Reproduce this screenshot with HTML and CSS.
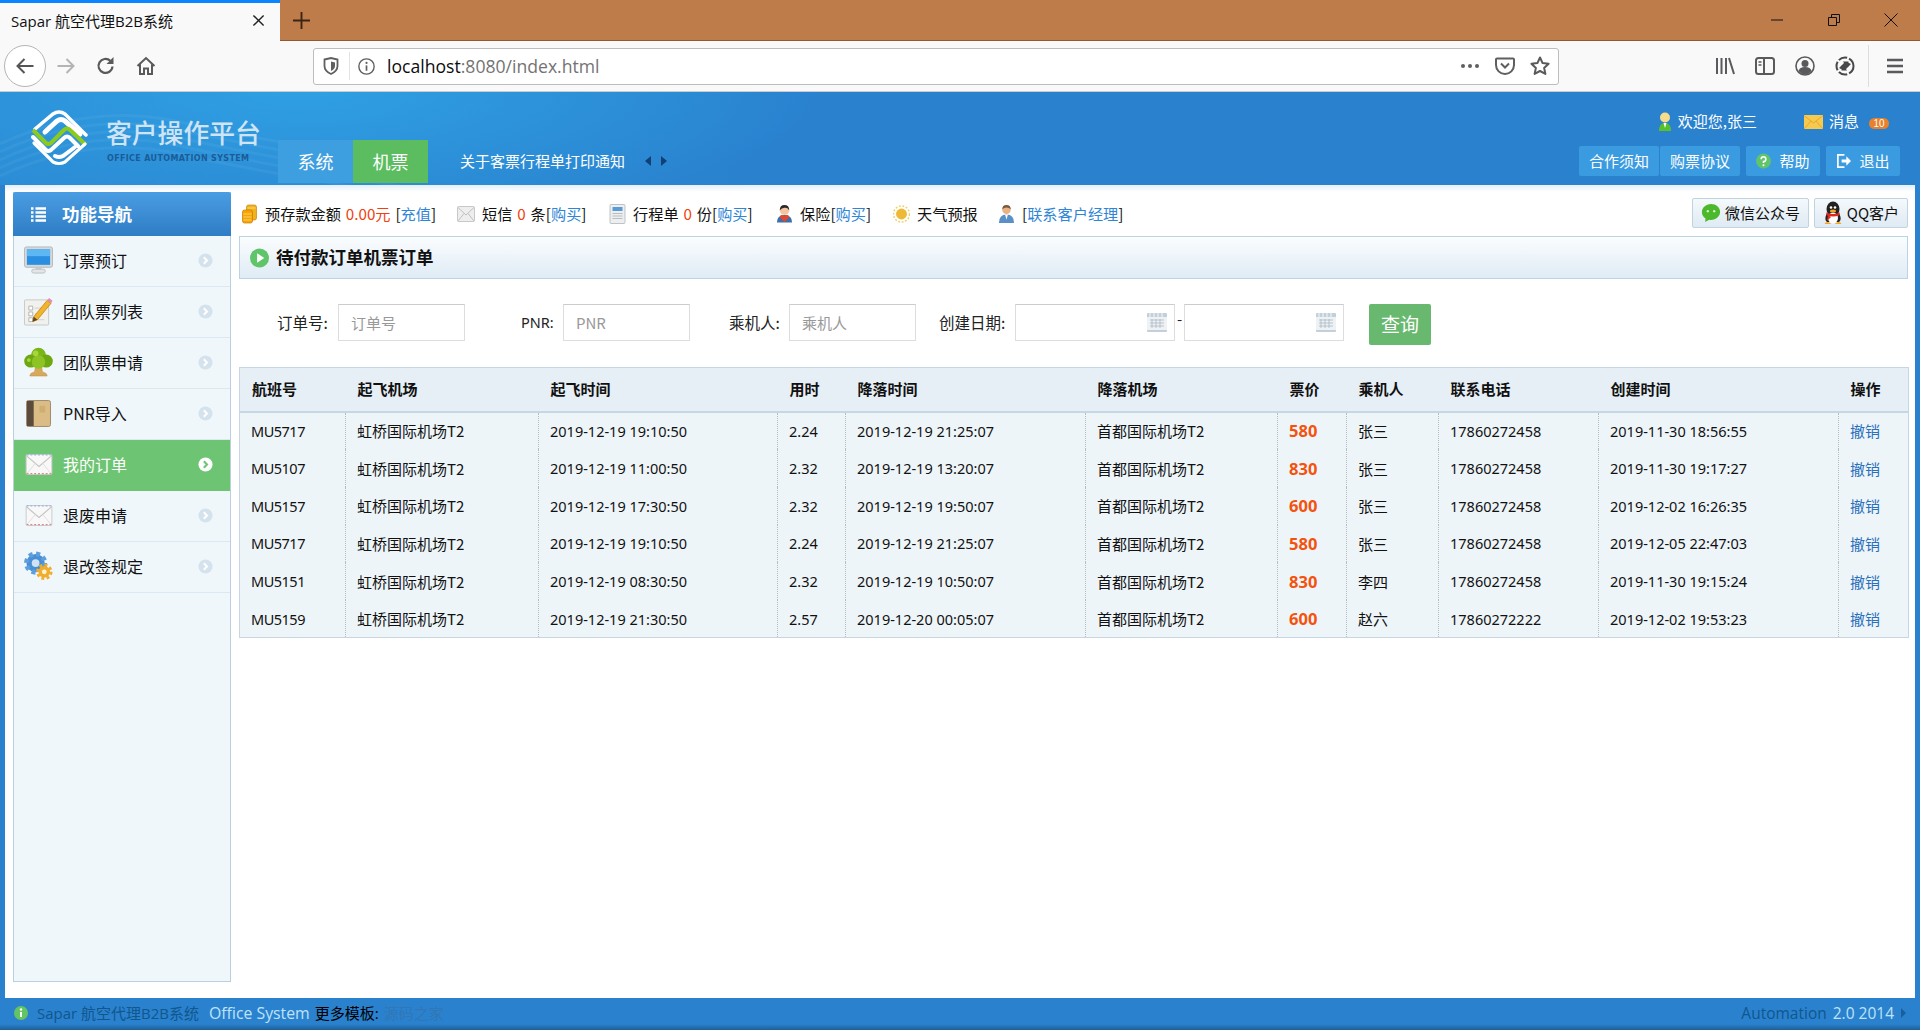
FILE: index.html
```html
<!DOCTYPE html>
<html lang="zh-CN">
<head>
<meta charset="utf-8">
<title>Sapar 航空代理B2B系统</title>
<link rel="stylesheet" href="styles.css">
</head>
<body>
<svg class="defs" width="0" height="0" aria-hidden="true">
  <defs>
    <symbol id="i-arrow" viewBox="0 0 16 16"><circle class="chev-bg" cx="8" cy="8" r="7.500"/><path class="chev" d="M6.200 4.600 9.600 8l-3.400 3.400" fill="none" stroke-width="2.200"/></symbol>
    <symbol id="i-envelope" viewBox="0 0 28 22"><rect x=".5" y=".5" width="27" height="21" rx="1.500" fill="#f8f8f8" stroke="#c9c9c9"/><path d="M1 2 14 13 27 2" fill="none" stroke="#c4c4c4" stroke-width="1.200"/><path d="M1 21 10 10M27 21 18 10" stroke="#ddd"/><path d="M1 20.500h26" stroke="#d98a8a" stroke-width="1.200" stroke-dasharray="2 2"/><path d="M1 1h26" stroke="#8aa9d9" stroke-width="1" stroke-dasharray="2 2"/></symbol>
    <symbol id="i-monitor" viewBox="0 0 30 28"><rect x=".5" y=".5" width="29" height="21" rx="2" fill="#d6d9dc" stroke="#b4b8bb"/><rect x="3" y="3" width="24" height="16" fill="#2a8fe0"/><rect x="3" y="3" width="24" height="7" fill="#5cb7f2"/><path d="M12 22h6v2h-6z" fill="#c9cccf"/><rect x="8" y="23.500" width="14" height="4" rx="2" fill="#e3e5e7" stroke="#bdc0c3"/></symbol>
    <symbol id="i-list" viewBox="0 0 30 30"><rect x=".5" y="3.500" width="25" height="26" rx="1" fill="#f1f1ee" stroke="#c9c9c6"/><path d="M5 10h4v4H5zM5 16h4v4H5zM5 22h4v4H5z" fill="#fff" stroke="#b4b4b0"/><path d="M11 12h10M11 18h6M11 24h10" stroke="#cfcfcb"/><path d="M10 21 24 4l4 3-14 17-5 2z" fill="#f3b429" stroke="#b37b12" stroke-width=".7"/><path d="M24 4l2-2.500 3.500 3L28 7z" fill="#e58cb0"/><path d="M10 21l-1 5 5-2z" fill="#5b4630"/></symbol>
    <symbol id="i-tree" viewBox="0 0 30 30"><path d="M12 18h6l1 7 4 2 1 2.500H6L7 27l4-2z" fill="#d8a95b" stroke="#b98a3e" stroke-width=".5"/><circle cx="15" cy="8" r="7.800" fill="#7cb518"/><circle cx="7" cy="14" r="6.800" fill="#6da711"/><circle cx="23" cy="14" r="6.800" fill="#6da711"/><circle cx="15" cy="15" r="7" fill="#8dc423"/><circle cx="12" cy="6" r="3" fill="#a5d63d"/><circle cx="5" cy="13" r="2" fill="#a5d63d"/></symbol>
    <symbol id="i-book" viewBox="0 0 26 28"><rect x=".5" y=".5" width="25" height="27" rx="2" fill="#dcbc85" stroke="#9b8a70"/><rect x="1" y="1" width="7" height="26" fill="#5b4b3c"/><path d="M14 6h6v7h-6z" fill="#cfae76"/></symbol>
    <symbol id="i-gears" viewBox="0 0 30 30"><circle cx="12" cy="12" r="9.500" fill="#4a8fd3"/><circle cx="12" cy="12" r="9.500" fill="none" stroke="#5a9fe0" stroke-width="5" stroke-dasharray="4 3.500"/><circle cx="12" cy="12" r="4" fill="#cfe3f5"/><circle cx="21" cy="21" r="6" fill="#f0ad2e"/><circle cx="21" cy="21" r="7" fill="none" stroke="#f0ad2e" stroke-width="3" stroke-dasharray="3 2.500"/><circle cx="21" cy="21" r="2.500" fill="#fff4d0"/></symbol>
    <symbol id="i-coins" viewBox="0 0 16 20"><rect x="5" y="1" width="10" height="15" rx="2" fill="#f0b21f" stroke="#c9870d" stroke-width=".7"/><rect x="1" y="6" width="10" height="13" rx="2" fill="#f7a600" stroke="#c9780d" stroke-width=".7"/><path d="M2 10h8M2 13h8M2 16h8M6 4h8" stroke="#ffe08a" stroke-width=".8"/></symbol>
    <symbol id="i-mail-g" viewBox="0 0 18 16"><rect x=".5" y=".5" width="17" height="15" rx="1" fill="#eeeeee" stroke="#c8c8c8"/><path d="M1 1.500 9 9l8-7.500M1 15l6-7.500M17 15l-6-7.500" fill="none" stroke="#c0c0c0"/></symbol>
    <symbol id="i-doc" viewBox="0 0 16 20"><rect x=".5" y=".5" width="15" height="19" rx="1" fill="#eceeef" stroke="#bfc3c6"/><rect x="3" y="3" width="10" height="4" fill="#5a9bd5"/><path d="M3 9.500h10M3 12h10M3 14.500h10" stroke="#b9bdc0"/></symbol>
    <symbol id="i-agent" viewBox="0 0 18 20"><circle cx="9" cy="6" r="5" fill="#f2c6a2"/><path d="M4 6q0-5.500 5-5.500T14 6q-2-3-5-2.500T4 6z" fill="#2f2a28"/><path d="M1 19q0-8 8-8t8 8z" fill="#3d6fae"/><path d="M9 18.500 4.500 14q-1-3 2-3 1.500 0 2.500 1.500 1-1.500 2.500-1.500 3 0 2 3z" fill="#e2492b"/></symbol>
    <symbol id="i-sun" viewBox="0 0 18 18"><circle cx="9" cy="9" r="8.500" fill="none" stroke="#f3cf6a" stroke-width="1.600" stroke-dasharray="2 1.700"/><circle cx="9" cy="9" r="5.800" fill="#eeb936"/></symbol>
    <symbol id="i-man" viewBox="0 0 18 20"><circle cx="9" cy="5.500" r="4.500" fill="#eab284"/><path d="M4.500 5q0-4.500 4.500-4.500T13.500 5q-2-2-4.500-2T4.500 5z" fill="#7a5a3f"/><path d="M1 19.500q0-9 8-9t8 9z" fill="#5a8fc8"/><path d="M7.500 10.500h3L9 16z" fill="#fff"/></symbol>
    <symbol id="i-cal" viewBox="0 0 20 19"><rect width="20" height="19" rx="1" fill="#c3d0da"/><rect y="4" width="20" height="13" fill="#eef2f5"/><path d="M3 0v4M7 0v4M11 0v4M15 0v4" stroke="#f5f7f9"/><path d="M3 7h14M3 10h14M3 13h14M5 6v9M9 6v9M13 6v9" stroke="#aab8c3" stroke-width=".8"/></symbol>
  </defs>
</svg>

<div class="tabbar">
  <div class="tab">
    <span class="tab-title">Sapar 航空代理B2B系统</span>
    <svg class="tab-x" viewBox="0 0 14 14"><path d="M1.500 1.500l11 11M12.500 1.500l-11 11" stroke="#222" stroke-width="1.500"/></svg>
  </div>
  <svg class="tab-new" viewBox="0 0 18 18"><path d="M9 0v18M0 9h18" stroke="#3a2414" stroke-width="2"/></svg>
  <div class="win-ctrls">
    <svg viewBox="0 0 14 14"><path d="M1 7h12" stroke="#111" stroke-width="1"/></svg>
    <svg viewBox="0 0 14 14"><path d="M1.500 4.500h8v8h-8zM4.500 4.500v-3h8v8h-3" fill="none" stroke="#111"/></svg>
    <svg viewBox="0 0 14 14"><path d="M.5.500l13 13M13.500.500l-13 13" stroke="#111"/></svg>
  </div>
</div>

<div class="toolbar">
  <div class="back-btn"><svg viewBox="0 0 20 20"><path d="M18.500 10H3M9.500 3 2.500 10l7 7" fill="none" stroke="#555" stroke-width="2"/></svg></div>
  <svg class="tb-ico" viewBox="0 0 20 20"><path d="M1.500 10H17M10.500 3l7 7-7 7" fill="none" stroke="#b4b4b6" stroke-width="2"/></svg>
  <svg class="tb-ico" viewBox="0 0 20 20"><path d="M16.500 10.500a7 7 0 1 1-2.200-5.700" fill="none" stroke="#5a5a5c" stroke-width="2.200"/><path d="M17.500 1v7h-7z" fill="#5a5a5c"/></svg>
  <svg class="tb-ico" viewBox="0 0 20 20"><path d="M1.500 10 10 2l8.500 8M4 8.500V18h4v-5.500h4V18h4V8.500" fill="none" stroke="#5a5a5c" stroke-width="2"/></svg>
  <div class="urlbar">
    <svg class="u-shield" viewBox="0 0 16 18"><path d="M1.500 2.500 8 1l6.500 1.500V9q0 5-6.500 8Q1.500 14 1.500 9z" fill="none" stroke="#5f5f61" stroke-width="1.800"/><path d="M8 4.500 12 5.500V9q0 3-4 5z" fill="#5f5f61"/></svg>
    <span class="u-sep"></span>
    <svg class="u-info" viewBox="0 0 16 16"><circle cx="8" cy="8" r="7.200" fill="none" stroke="#5f5f61" stroke-width="1.300"/><path d="M8 7v5" stroke="#5f5f61" stroke-width="1.600"/><circle cx="8" cy="4.600" r="1" fill="#5f5f61"/></svg>
    <span class="u-text">localhost<span class="u-dim">:8080/index.html</span></span>
    <svg class="u-more" viewBox="0 0 20 6"><circle cx="3" cy="3" r="2" fill="#5f5f61"/><circle cx="10" cy="3" r="2" fill="#5f5f61"/><circle cx="17" cy="3" r="2" fill="#5f5f61"/></svg>
    <svg class="u-pocket" viewBox="0 0 20 20"><path d="M2 2.500h16a1 1 0 0 1 1 1V9A9 9 0 0 1 1 9V3.500a1 1 0 0 1 1-1z" fill="none" stroke="#5f5f61" stroke-width="2"/><path d="M6 7.500l4 4 4-4" fill="none" stroke="#5f5f61" stroke-width="2"/></svg>
    <svg class="u-star" viewBox="0 0 20 20"><path d="M10 1.500l2.600 5.600 6 .7-4.500 4.100 1.300 6L10 15l-5.400 2.900 1.300-6L1.400 7.800l6-.7z" fill="none" stroke="#5a5a5c" stroke-width="2" stroke-linejoin="round"/></svg>
  </div>
  <div class="tb-right">
    <svg viewBox="0 0 20 20"><path d="M2 2v16M6.500 2v16M11 2v16M14 2l5 16" stroke="#5a5a5c" stroke-width="2" fill="none"/></svg>
    <svg viewBox="0 0 20 20"><rect x="1" y="2" width="18" height="16" rx="2.500" fill="none" stroke="#5a5a5c" stroke-width="2"/><path d="M9 2v16" stroke="#5a5a5c" stroke-width="2"/><path d="M3.500 6h3M3.500 9h3" stroke="#5a5a5c" stroke-width="1.500"/></svg>
    <svg viewBox="0 0 20 20"><circle cx="10" cy="10" r="9" fill="none" stroke="#5a5a5c" stroke-width="1.600"/><circle cx="10" cy="7.500" r="3.500" fill="#5a5a5c"/><path d="M3.500 15q1-4 6.500-4t6.500 4q-3 3.500-6.500 3.500T3.500 15z" fill="#5a5a5c"/></svg>
    <svg viewBox="0 0 20 20"><circle cx="10" cy="10" r="8.500" fill="none" stroke="#48484a" stroke-width="2" stroke-dasharray="9 2"/><path d="M4 12 9 7 8 5.500h5.500V11L12 9.500 8 14zM16 8l-5 5 1 1.500H6.500V9L8 10.500l4-4.500z" fill="#48484a"/></svg>
    <span class="tb-sep"></span>
    <svg class="tb-menu" viewBox="0 0 16 16"><path d="M0 2h16M0 8h16M0 14h16" stroke="#5a5a5c" stroke-width="2.400"/></svg>
  </div>
</div>

<header class="site-head">
  <svg class="waves" viewBox="0 0 480 93" preserveAspectRatio="none" aria-hidden="true">
    <path d="M0 52Q90 10 180 30T400 70" />
    <path d="M0 60Q90 18 180 38T400 78" />
    <path d="M0 68Q90 26 180 46T400 86" />
    <path d="M0 76Q90 34 180 54T400 94" />
    <path d="M0 84Q90 42 180 62T400 102" />
  </svg>
  <div class="brand">
    <svg class="logo" viewBox="0 0 58 57">
      <path d="M4 19 22 4q6-4 12 0l21 21" fill="none" stroke="#fff" stroke-width="3.500" stroke-linecap="round"/>
      <path d="M14 22 26 11q4-3 8 0l15 13" fill="none" stroke="#fff" stroke-width="5" stroke-linecap="round"/>
      <path d="M2 20 15 33q2 2 5 0L33 20q3-3 6 0l16 15" fill="none" stroke="#8ccb1b" stroke-width="4"/>
      <path d="M2 27 15 40q2 2 5 0L33 28q3-3 6 0l8 8" fill="none" stroke="#fff" stroke-width="4" stroke-linecap="round"/>
      <path d="M24 46q4 2 8 0L44 37" fill="none" stroke="#fff" stroke-width="4" stroke-linecap="round"/>
      <path d="M3 33 22 52q6 3 12 0l20-18" fill="none" stroke="#fff" stroke-width="3.200" stroke-linecap="round"/>
    </svg>
    <div class="brand-text">
      <div class="brand-name">客户操作平台</div>
      <div class="brand-sub">OFFICE AUTOMATION SYSTEM</div>
    </div>
  </div>
  <nav class="main-nav">
    <a class="nav-item">系统</a>
    <a class="nav-item nav-on">机票</a>
  </nav>
  <div class="notice">关于客票行程单打印通知<span class="notice-arrows"><i class="tri-l"></i><i class="tri-r"></i></span></div>
  <div class="head-right">
    <div class="user-row">
      <svg class="u-ico" viewBox="0 0 14 20"><circle cx="7" cy="5.500" r="5" fill="#f7dc8b"/><path d="M1 19q0-8 6-8t6 8z" fill="#57c02b"/><path d="M5.500 11h3L7 16z" fill="#fff"/></svg>
      <span class="user-name">欢迎您,张三</span>
      <svg class="m-ico" viewBox="0 0 19 14"><rect width="19" height="14" fill="#f6c94f"/><path d="M0 .5 9.500 8 19 .5M0 14l7-8M19 14l-7-8" fill="none" stroke="#e8a92c"/></svg>
      <span class="msg">消息</span>
      <span class="badge">10</span>
    </div>
    <div class="btn-row">
      <a class="hbtn">合作须知</a>
      <a class="hbtn hbtn-adj">购票协议</a>
      <a class="hbtn hbtn-gap"><svg class="hb-ico" viewBox="0 0 16 16"><circle cx="8" cy="8" r="8" fill="#5fc46a"/><path d="M5.500 6q0-2.500 2.500-2.500T10.500 6 8 8.500V10" fill="none" stroke="#fff" stroke-width="1.700"/><circle cx="8" cy="12.500" r="1.100" fill="#fff"/></svg>帮助</a>
      <a class="hbtn hbtn-gap"><svg class="hb-ico" viewBox="0 0 16 16"><path d="M9 1.500H2v13h7" fill="none" stroke="#fff" stroke-width="1.800"/><path d="M6 6.500h5V3l5 5-5 5V9.500H6z" fill="#fff"/></svg>退出</a>
    </div>
  </div>
</header>

<div class="page">
  <aside class="side">
    <div class="side-head">
      <svg class="side-list" viewBox="0 0 15 15"><path d="M0 1.500h2.500M4.500 1.500H15M0 5.500h2.500M4.500 5.500H15M0 9.500h2.500M4.500 9.500H15M0 13.500h2.500M4.500 13.500H15" stroke="#fff" stroke-width="2.400"/></svg>
      <span>功能导航</span>
    </div>
    <a class="side-item"><span class="si-ico"><svg class="si-monitor"><use href="#i-monitor"/></svg></span><span class="si-text">订票预订</span><svg class="si-arrow"><use href="#i-arrow"/></svg></a>
    <a class="side-item"><span class="si-ico"><svg class="si-list"><use href="#i-list"/></svg></span><span class="si-text">团队票列表</span><svg class="si-arrow"><use href="#i-arrow"/></svg></a>
    <a class="side-item"><span class="si-ico"><svg class="si-tree"><use href="#i-tree"/></svg></span><span class="si-text">团队票申请</span><svg class="si-arrow"><use href="#i-arrow"/></svg></a>
    <a class="side-item"><span class="si-ico"><svg class="si-book"><use href="#i-book"/></svg></span><span class="si-text">PNR导入</span><svg class="si-arrow"><use href="#i-arrow"/></svg></a>
    <a class="side-item side-on"><span class="si-ico"><svg class="si-env"><use href="#i-envelope"/></svg></span><span class="si-text">我的订单</span><svg class="si-arrow"><use href="#i-arrow"/></svg></a>
    <a class="side-item"><span class="si-ico"><svg class="si-env"><use href="#i-envelope"/></svg></span><span class="si-text">退废申请</span><svg class="si-arrow"><use href="#i-arrow"/></svg></a>
    <a class="side-item"><span class="si-ico"><svg class="si-gears"><use href="#i-gears"/></svg></span><span class="si-text">退改签规定</span><svg class="si-arrow"><use href="#i-arrow"/></svg></a>
  </aside>

  <main class="main">
    <div class="strip">
      <div class="s-item s-w1"><svg class="s-ico"><use href="#i-coins"/></svg>预存款金额 <em class="red">0.00元</em> [<a class="lnk">充值</a>]</div>
      <div class="s-item s-w2"><svg class="s-ico s-ico-m"><use href="#i-mail-g"/></svg>短信 <em class="red">0</em> 条[<a class="lnk">购买</a>]</div>
      <div class="s-item s-w3"><svg class="s-ico"><use href="#i-doc"/></svg>行程单 <em class="red">0</em> 份[<a class="lnk">购买</a>]</div>
      <div class="s-item s-w4"><svg class="s-ico"><use href="#i-agent"/></svg>保险[<a class="lnk">购买</a>]</div>
      <div class="s-item s-w5"><svg class="s-ico"><use href="#i-sun"/></svg>天气预报</div>
      <div class="s-item"><svg class="s-ico"><use href="#i-man"/></svg>[<a class="lnk">联系客户经理</a>]</div>
      <div class="s-btns">
        <a class="sbtn sbtn-wx"><svg class="sb-ico" viewBox="0 0 22 22"><path d="M11 1C5.500 1 1 5 1 10c0 3 1.500 5.500 4 7l-.5 4 4.500-2.500q1 .2 2 .2c5.500 0 10-4 10-9s-4.500-8.700-10-8.700z" fill="#4cb82c"/><circle cx="7.500" cy="9" r="1.300" fill="#d9f2cf"/><circle cx="14.500" cy="9" r="1.300" fill="#d9f2cf"/></svg>微信公众号</a>
        <a class="sbtn sbtn-qq"><svg class="sb-ico" viewBox="0 0 20 24"><ellipse cx="10" cy="8" rx="6.500" ry="7.500" fill="#222"/><path d="M3.500 13Q1 19 4 21h12q3-2 .5-8z" fill="#222"/><ellipse cx="10" cy="17" rx="5" ry="5.500" fill="#fff"/><path d="M3 11.500q7 3 14 0l-1 3q-6 2-12 0z" fill="#e0261c"/><path d="M5 14l-1 6 4-4z" fill="#e0261c"/><ellipse cx="10" cy="10" rx="3" ry="1.500" fill="#f5a623"/><path d="M1.500 23q2-4 7 0zM18.500 23q-2-4-7 0z" fill="#f5a623"/><circle cx="8" cy="6.500" r="1.300" fill="#fff"/><circle cx="12" cy="6.500" r="1.300" fill="#fff"/></svg>QQ客户</a>
      </div>
    </div>

    <div class="title-bar">
      <svg class="t-ico" viewBox="0 0 20 20"><circle cx="10" cy="10" r="10" fill="#5fc46a"/><path d="M7.500 5 15 10l-7.500 5z" fill="#fff"/></svg>
      <h1>待付款订单机票订单</h1>
    </div>

    <form class="search">
      <label class="lb lb-1">订单号:</label><input class="ipt" placeholder="订单号">
      <label class="lb lb-2">PNR:</label><input class="ipt" placeholder="PNR">
      <label class="lb lb-3">乘机人:</label><input class="ipt" placeholder="乘机人">
      <label class="lb lb-4">创建日期:</label>
      <span class="date"><svg class="cal"><use href="#i-cal"/></svg></span>
      <span class="dash">-</span>
      <span class="date"><svg class="cal"><use href="#i-cal"/></svg></span>
      <button class="query" type="button">查询</button>
    </form>

    <table class="grid">
      <colgroup>
        <col class="c1"><col class="c2"><col class="c3"><col class="c4"><col class="c5"><col class="c6"><col class="c7"><col class="c8"><col class="c9"><col class="c10"><col class="c11">
      </colgroup>
      <thead>
        <tr><th>航班号</th><th>起飞机场</th><th>起飞时间</th><th>用时</th><th>降落时间</th><th>降落机场</th><th>票价</th><th>乘机人</th><th>联系电话</th><th>创建时间</th><th>操作</th></tr>
      </thead>
      <tbody>
        <tr><td class="n fl">MU5717</td><td>虹桥国际机场T2</td><td class="n">2019-12-19 19:10:50</td><td class="n">2.24</td><td class="n">2019-12-19 21:25:07</td><td>首都国际机场T2</td><td class="price">580</td><td>张三</td><td class="n">17860272458</td><td class="n">2019-11-30 18:56:55</td><td><a class="act">撤销</a></td></tr>
        <tr><td class="n fl">MU5107</td><td>虹桥国际机场T2</td><td class="n">2019-12-19 11:00:50</td><td class="n">2.32</td><td class="n">2019-12-19 13:20:07</td><td>首都国际机场T2</td><td class="price">830</td><td>张三</td><td class="n">17860272458</td><td class="n">2019-11-30 19:17:27</td><td><a class="act">撤销</a></td></tr>
        <tr><td class="n fl">MU5157</td><td>虹桥国际机场T2</td><td class="n">2019-12-19 17:30:50</td><td class="n">2.32</td><td class="n">2019-12-19 19:50:07</td><td>首都国际机场T2</td><td class="price">600</td><td>张三</td><td class="n">17860272458</td><td class="n">2019-12-02 16:26:35</td><td><a class="act">撤销</a></td></tr>
        <tr><td class="n fl">MU5717</td><td>虹桥国际机场T2</td><td class="n">2019-12-19 19:10:50</td><td class="n">2.24</td><td class="n">2019-12-19 21:25:07</td><td>首都国际机场T2</td><td class="price">580</td><td>张三</td><td class="n">17860272458</td><td class="n">2019-12-05 22:47:03</td><td><a class="act">撤销</a></td></tr>
        <tr><td class="n fl">MU5151</td><td>虹桥国际机场T2</td><td class="n">2019-12-19 08:30:50</td><td class="n">2.32</td><td class="n">2019-12-19 10:50:07</td><td>首都国际机场T2</td><td class="price">830</td><td>李四</td><td class="n">17860272458</td><td class="n">2019-11-30 19:15:24</td><td><a class="act">撤销</a></td></tr>
        <tr><td class="n fl">MU5159</td><td>虹桥国际机场T2</td><td class="n">2019-12-19 21:30:50</td><td class="n">2.57</td><td class="n">2019-12-20 00:05:07</td><td>首都国际机场T2</td><td class="price">600</td><td>赵六</td><td class="n">17860272222</td><td class="n">2019-12-02 19:53:23</td><td><a class="act">撤销</a></td></tr>
      </tbody>
    </table>
  </main>
</div>

<footer class="foot">
  <svg class="f-ico" viewBox="0 0 14 14"><circle cx="7" cy="7" r="7" fill="#62c462"/><path d="M7 6v5" stroke="#fff" stroke-width="2"/><circle cx="7" cy="3.500" r="1.200" fill="#fff"/></svg>
  <span class="f-dark">Sapar 航空代理B2B系统</span>
  <span class="f-light">Office System</span>
  <span class="f-black">更多模板:</span>
  <span class="f-faint">源码之家</span>
  <span class="f-right"><span class="f-auto">Automation</span><span class="f-ver">2.0 2014</span><i class="f-tri"></i></span>
</footer>
</body>
</html>
```

FILE: styles.css
```css
* { box-sizing: border-box; }
html, body { height: 100%; }
body {
  margin: 0;
  display: flex;
  flex-direction: column;
  overflow: hidden;
  font-family: "Noto Sans CJK SC", sans-serif;
  font-size: 15px;
  color: #111;
  background: #fff;
}
.defs { position: absolute; }
em { font-style: normal; }
a { text-decoration: none; }

/* browser chrome */
.tabbar {
  height: 41px;
  flex: none;
  display: flex;
  align-items: center;
  background: #bf7c4b;
  border-bottom: 1px solid #8f5a33;
}
.tab {
  width: 280px;
  height: 41px;
  flex: none;
  display: flex;
  align-items: center;
  padding: 0 0 2px 11px;
  background: #f9f9fa;
  border-top: 3px solid #0a84ff;
}
.tab-title { flex: 1; font-size: 15px; font-family: "Open Sans", "Noto Sans CJK SC", sans-serif; color: #111; }
.tab-x { width: 13px; height: 13px; margin-right: 15px; }
.tab-new { width: 17px; height: 17px; margin-left: 13px; }
.win-ctrls { margin-left: auto; display: flex; gap: 43px; padding-right: 22px; }
.win-ctrls svg { width: 14px; height: 14px; }

.toolbar {
  height: 51px;
  flex: none;
  display: flex;
  align-items: center;
  padding-left: 4px;
  background: #f9f9fa;
  border-bottom: 1px solid #ccc;
}
.back-btn {
  width: 42px;
  height: 42px;
  flex: none;
  display: flex;
  align-items: center;
  justify-content: center;
  border: 1px solid #b5b5b5;
  border-radius: 50%;
  background: #fff;
}
.back-btn svg { width: 20px; height: 20px; }
.tb-ico { width: 20px; height: 20px; flex: none; margin-left: 20px; }
.tb-ico:first-of-type { margin-left: 10px; }
.urlbar {
  width: 1246px;
  height: 37px;
  flex: none;
  margin-left: 157px;
  display: flex;
  align-items: center;
  background: #fff;
  border: 1px solid #bdbdbd;
  border-radius: 3px;
  padding: 0 8px 0 10px;
}
.toolbar > .tb-ico + .urlbar { margin-left: 157px; }
.u-shield { width: 16px; height: 18px; flex: none; margin-left: -1px; }
.u-sep { width: 1px; height: 28px; background: #e2e2e2; margin: 0 9px 0 10px; flex: none; }
.u-info { width: 17px; height: 17px; flex: none; margin-left: -1px; }
.u-text { margin-left: 12px; font-family: "Open Sans", sans-serif; font-size: 17.600px; color: #0c0c0d; flex: 1; }
.u-dim { color: #737373; }
.u-more { width: 20px; height: 6px; flex: none; margin-right: -2px; }
.u-pocket { width: 20px; height: 20px; flex: none; margin-left: 17px; }
.u-star { width: 20px; height: 20px; flex: none; margin-left: 15px; }
.tb-right {
  flex: 1;
  display: flex;
  align-items: center;
  justify-content: flex-end;
  gap: 20px;
  padding-right: 17px;
}
.tb-right svg { width: 20px; height: 20px; flex: none; }
.tb-sep { width: 1px; height: 42px; background: #ddd; margin: 0 -2px 0 -7px; }
.tb-right .tb-menu { width: 16px; height: 16px; }

/* header */
.site-head {
  position: relative;
  height: 93px;
  flex: none;
  display: flex;
  background:
    radial-gradient(ellipse 520px 130px at 300px 0, #2f9fe3, rgba(47, 159, 227, 0) 100%),
    linear-gradient(to right, #2b8bd4, #2a82cf 40%);
}
.waves { position: absolute; left: 0; top: 0; width: 480px; height: 93px; pointer-events: none; }
.waves path { fill: none; stroke: #fff; stroke-opacity: .05; stroke-width: 3; }
.brand { position: relative; width: 278px; flex: none; display: flex; padding: 18px 0 0 31px; }
.logo { width: 58px; height: 57px; flex: none; }
.brand-text { margin-left: 17px; padding-top: 8px; }
.brand-name { font-size: 25.800px; line-height: 28px; color: #cfe4f4; font-weight: 500; white-space: nowrap; }
.brand-sub { margin: 8px 0 0 1px; font-family: "DejaVu Sans", sans-serif; font-size: 8px; line-height: 10px; letter-spacing: .35px; color: #1a5c98; white-space: nowrap; font-weight: 700; }
.main-nav { position: relative; display: flex; align-self: flex-end; margin-bottom: 2px; }
.nav-item {
  width: 75px;
  height: 43px;
  display: flex;
  align-items: center;
  justify-content: center;
  padding-bottom: 2px;
  background: #3d9ee0;
  color: #fff;
  font-size: 18px;
}
.nav-on { background: #5bbd60; }
.notice { position: relative; margin: 56px 0 0 32px; font-size: 15px; line-height: 26px; color: #fff; white-space: nowrap; display: flex; align-items: center; height: 26px; }
.notice-arrows { display: flex; gap: 10px; margin-left: 20px; }
.tri-l, .tri-r { display: block; width: 0; height: 0; border-top: 5px solid transparent; border-bottom: 5px solid transparent; }
.tri-l { border-right: 6px solid #123f74; }
.tri-r { border-left: 6px solid #123f74; }
.head-right { margin-left: auto; padding: 18px 20px 0 0; display: flex; flex-direction: column; align-items: flex-end; }
.user-row { display: flex; align-items: center; height: 24px; color: #fff; font-size: 15px; padding: 0 11px 3px 0; }
.u-ico { width: 14px; height: 20px; margin: 3px 6px 0 0; }
.m-ico { width: 19px; height: 14px; margin: 3px 6px 0 47px; }
.msg { font-size: 15px; }
.badge { margin: 5px 0 0 10px; width: 20px; height: 11px; border-radius: 6px; background: #e8812a; font-family: "Liberation Sans", sans-serif; font-size: 10px; line-height: 11px; text-align: center; color: #fff; }
.btn-row { display: flex; margin-top: 12px; }
.hbtn {
  height: 30px;
  display: flex;
  align-items: center;
  justify-content: center;
  width: 80px;
  padding-bottom: 2px;
  background: #3a9be0;
  border-radius: 2px;
  color: #fff;
  font-size: 15px;
}
.hbtn-adj { margin-left: 1px; }
.hbtn-gap { margin-left: 6px; width: 74px; }
.hb-ico { width: 15px; height: 16px; margin: 2px 8px 0 0; }

/* page */
.page {
  flex: 1;
  min-height: 0;
  display: flex;
  padding: 7px 7px 0 8px;
  border-left: 5px solid #2a82cf;
  border-right: 5px solid #2a82cf;
  background: linear-gradient(#e4eff7, #fff 7px);
}
.side {
  width: 218px;
  height: 790px;
  flex: none;
  background: #eff7fb;
  border: 1px solid #b9d0e0;
  border-top: 0;
}
.side-head {
  height: 44px;
  margin: 0 -1px;
  display: flex;
  align-items: center;
  padding: 0 0 2px 18px;
  border-radius: 2px 2px 0 0;
  background: linear-gradient(#4a9de3, #2f7dc4);
  color: #fff;
  font-size: 17.500px;
  font-weight: 700;
}
.side-list { width: 15px; height: 15px; margin: 2px 16px 0 0; }
.side-item {
  height: 51px;
  display: flex;
  align-items: center;
  padding: 0 0 2px 10px;
  border-bottom: 1px solid #dce8f0;
  color: #111;
  font-size: 16px;
}
.side-on { background: #6dc573; color: #fff; border-bottom-color: #6dc573; }
.si-ico { width: 29px; height: 30px; margin-right: 10px; display: flex; align-items: center; justify-content: center; flex: none; }
.si-monitor { width: 30px; height: 28px; }
.si-list { width: 30px; height: 30px; }
.si-tree { width: 30px; height: 30px; }
.si-book { width: 25px; height: 27px; }
.si-env { width: 28px; height: 21px; }
.si-gears { width: 30px; height: 30px; }
.si-text { flex: 1; }
.si-arrow { width: 15px; height: 15px; margin-right: 17px; --chev-bg: #d3e2ec; --chev: #fff; }
.side-on .si-arrow { --chev-bg: #fff; --chev: #6dc573; }
.chev-bg { fill: var(--chev-bg); }
.chev { stroke: var(--chev); }

.main { flex: 1; min-width: 0; margin-left: 8px; }
.strip { height: 44px; display: flex; align-items: center; padding: 0 0 2px 2px; font-size: 15.200px; }
.s-item { display: flex; align-items: center; white-space: pre; word-spacing: 1.500px; }
.s-w1 { width: 216px; }
.s-w2 { width: 152px; }
.s-w3 { width: 167px; }
.s-w4 { width: 117px; }
.s-w5 { width: 105px; }
.s-ico { width: 17px; height: 20px; margin: 2px 7px 0 0; flex: none; }
.s-ico-m { width: 18px; height: 16px; }
.red { color: #f2400e; }
.lnk { color: #2f86d6; }
.s-btns { margin-left: auto; display: flex; gap: 5px; margin-top: 0; }
.sbtn {
  height: 30px;
  display: flex;
  align-items: center;
  justify-content: center;
  padding-bottom: 1px;
  border: 1px solid #c0d3e1;
  border-radius: 2px;
  background: linear-gradient(#f4f9fc, #dfeaf3);
  color: #111;
  font-size: 15px;
}
.sbtn-wx { width: 117px; }
.sbtn-qq { width: 94px; }
.sb-ico { width: 20px; height: 24px; margin-right: 4px; }

.title-bar {
  height: 43px;
  display: flex;
  align-items: center;
  padding: 0 0 2px 10px;
  background: linear-gradient(#fbfdfe, #dfebf5);
  border: 1px solid #bcd3e2;
}
.t-ico { width: 19px; height: 20px; margin: 2px 7px 0 0; }
h1 { margin: 0; font-size: 17.500px; font-weight: 700; color: #111; }

.search { display: flex; align-items: flex-start; padding: 25px 0 22px; font-size: 15px; }
.lb { height: 37px; line-height: 37px; margin-right: 9px; color: #222; white-space: nowrap; flex: none; font-size: 15.500px; }
.lb-1 { margin-left: 38px; width: 52px; }
.lb-2 { margin-left: 56px; width: 34px; margin-right: 8px; font-family: "Noto Sans", sans-serif; font-size: 14.500px; }
.lb-3 { margin-left: 39px; width: 51px; }
.lb-4 { margin-left: 23px; width: 67px; }
.ipt {
  width: 127px;
  height: 37px;
  flex: none;
  padding: 0 12px;
  border: 1px solid #ddd;
  border-top-color: #ccc;
  font: inherit;
  color: #333;
  outline: none;
}
.ipt::placeholder { color: #999; opacity: 1; }
.date {
  width: 160px;
  height: 37px;
  flex: none;
  display: flex;
  align-items: center;
  justify-content: flex-end;
  padding-right: 7px;
  border: 1px solid #ddd;
  border-top-color: #ccc;
}
.cal { width: 20px; height: 19px; }
.dash { width: 9px; line-height: 30px; text-align: center; color: #222; flex: none; }
.query {
  width: 62px;
  height: 41px;
  margin-left: 25px;
  flex: none;
  padding: 0 0 3px;
  border: 0;
  border-radius: 2px;
  background: #68b96f;
  color: #fff;
  font: inherit;
  font-size: 19px;
}

.grid {
  width: 1669px;
  table-layout: fixed;
  border-collapse: collapse;
  background: #eef5f9;
  border: 1px solid #c6d6e2;
}
.c1 { width: 106px; }
.c2 { width: 193px; }
.c3 { width: 239px; }
.c4 { width: 68px; }
.c5 { width: 240px; }
.c6 { width: 192px; }
.c7 { width: 69px; }
.c8 { width: 92px; }
.c9 { width: 160px; }
.c10 { width: 240px; }
.c11 { width: 70px; }
.grid th {
  height: 44px;
  padding: 0 12px 2px;
  text-align: left;
  font-size: 15px;
  font-weight: 700;
  color: #111;
  background: #e7eff6;
  border-bottom: 2px solid #c6d6e2;
}
.grid td {
  height: 37.700px;
  padding: 0 12px 0 11px;
  font-size: 15px;
  color: #111;
  white-space: nowrap;
  border-left: 1px dotted #b5bcc2;
}
.grid td:first-child { border-left: 0; }
.grid .n { font-family: "Noto Sans", sans-serif; font-size: 14.500px; }
.grid .fl { letter-spacing: -.5px; }
.grid .price { font-family: "Noto Sans", sans-serif; font-size: 16.500px; font-weight: 700; color: #f4520d; }
.act { color: #2a6fbb; }

/* footer */
.foot {
  height: 32px;
  flex: none;
  display: flex;
  align-items: center;
  padding: 0 14px 3px 14px;
  background: linear-gradient(#2a82cf 26px, #1f5f97 32px);
  font-family: "Open Sans", "Noto Sans CJK SC", sans-serif;
  font-size: 15px;
  white-space: nowrap;
}
.f-ico { width: 14px; height: 14px; margin-right: 9px; flex: none; }
.f-dark { color: #11568c; }
.f-light { color: #bfe3f7; margin-left: 10px; font-size: 15.800px; }
.f-black { color: #000; margin-left: 5px; }
.f-faint { color: #3176b5; margin-left: 5px; }
.f-right { margin-left: auto; display: flex; align-items: center; }
.f-auto { color: #11568c; font-size: 15.500px; }
.f-ver { color: #bfe3f7; margin-left: 6px; font-size: 15.500px; }
.f-tri { margin-left: 7px; width: 0; height: 0; border-top: 5px solid transparent; border-bottom: 5px solid transparent; border-left: 5px solid #1a5f9c; }
```
